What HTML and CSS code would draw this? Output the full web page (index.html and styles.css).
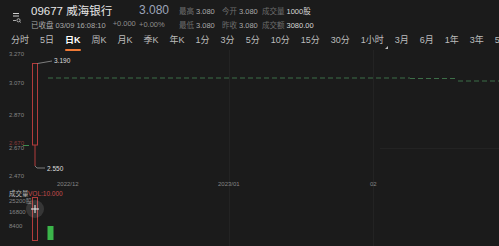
FILE: index.html
```html
<!DOCTYPE html>
<html lang="zh-CN">
<head>
    <meta charset="UTF-8">
    <meta name="viewport" content="width=device-width, initial-scale=1.0">
    <title>09677 威海银行</title>
    <link rel="stylesheet" href="styles.css">
</head>
<body>
    <div class="app">
        <div class="quote">
            <div class="menu-icon">
                <svg width="10" height="11" viewBox="0 0 10 11">
                    <line x1="1" y1="1.5" x2="7" y2="1.5" stroke="#cfcfcf" stroke-width="1"/>
                    <line x1="1" y1="4" x2="7" y2="4" stroke="#cfcfcf" stroke-width="1"/>
                    <line x1="1" y1="8.5" x2="4" y2="8.5" stroke="#cfcfcf" stroke-width="0.8"/>
                    <circle cx="6.5" cy="8.3" r="1.6" fill="none" stroke="#cfcfcf" stroke-width="0.8"/>
                    <line x1="7.6" y1="9.4" x2="8.8" y2="10.5" stroke="#cfcfcf" stroke-width="0.8"/>
                </svg>
            </div>
            <div class="stock-name">09677 威海银行</div>
            <div class="price">3.080</div>
            <div class="stat"><span class="label">最高</span>3.080</div>
            <div class="stat"><span class="label">今开</span>3.080</div>
            <div class="stat strong"><span class="label">成交量</span>1000股</div>

            <div class="status">
                <span>已收盘 03/09 16:08:10</span>
                <span class="change">+0.000</span>
            </div>
            <div class="change">+0.00%</div>
            <div class="stat"><span class="label">最低</span>3.080</div>
            <div class="stat"><span class="label">昨收</span>3.080</div>
            <div class="stat strong"><span class="label">成交额</span>3080.00</div>
        </div>

        <div class="tabs">
            <span class="tab">分时</span>
            <span class="tab">5日</span>
            <span class="tab active">日K</span>
            <span class="tab">周K</span>
            <span class="tab">月K</span>
            <span class="tab">季K</span>
            <span class="tab">年K</span>
            <span class="tab">1分</span>
            <span class="tab">3分</span>
            <span class="tab">5分</span>
            <span class="tab">10分</span>
            <span class="tab">15分</span>
            <span class="tab">30分</span>
            <span class="tab more">1小时</span>
            <span class="tab">3月</span>
            <span class="tab">6月</span>
            <span class="tab">1年</span>
            <span class="tab">3年</span>
            <span class="tab">5年</span>
        </div>

        <svg class="chart" width="499" height="196" viewBox="0 0 499 196">
            <!-- grid -->
            <line x1="229.5" y1="0" x2="229.5" y2="196" class="grid"/>
            <line x1="373.5" y1="0" x2="373.5" y2="196" class="grid"/>
            <line x1="380" y1="98.5" x2="499" y2="98.5" class="grid"/>

            <!-- y axis -->
            <text x="9" y="6" class="axis">3.270</text>
            <text x="9" y="35" class="axis">3.070</text>
            <text x="9" y="67" class="axis">2.870</text>
            <text x="9" y="95" class="axis red-faint">2.670</text>
            <text x="9" y="100" class="axis">2.670</text>
            <text x="9" y="128" class="axis">2.470</text>
            <line x1="23" y1="95.5" x2="29" y2="95.5" stroke="#3f8a4f" stroke-width="1"/>

            <!-- last price -->
            <path d="M48 28 H410" class="dash"/>
            <path d="M410 28.5 H458" class="dash"/>
            <path d="M458 31 H499" class="dash"/>

            <!-- candle -->
            <line x1="35" y1="95" x2="35" y2="116" class="wick"/>
            <rect x="32.5" y="13.5" width="5" height="81.5" class="candle"/>
            <polyline points="37.5,13.5 52,11" class="pointer"/>
            <polyline points="35,116 37,118 45,118" class="pointer"/>
            <text x="54" y="13.2" class="mark">3.190</text>
            <text x="47" y="120.8" class="mark">2.550</text>

            <!-- x axis -->
            <text x="57" y="136" class="axis">2022/12</text>
            <text x="218" y="136" class="axis">2023/01</text>
            <text x="370" y="136" class="axis">02</text>

            <!-- volume -->
            <text x="9" y="145.5" class="vol-title">成交量</text>
            <text x="28" y="145.5" class="vol-title red">VOL:10.000</text>
            <text x="9" y="152.5" class="axis">25200股</text>
            <text x="9" y="164" class="axis">16800</text>
            <text x="9" y="178" class="axis">8400</text>
            <rect x="32.5" y="147.5" width="5" height="43" class="candle"/>
            <rect x="47.5" y="176" width="6" height="14" fill="#3bb54a"/>

            <!-- crosshair -->
            <circle cx="35" cy="159" r="9" fill="rgba(255,255,255,0.12)"/>
            <line x1="31" y1="159" x2="39" y2="159" class="cross"/>
            <line x1="35" y1="155" x2="35" y2="163" class="cross"/>
        </svg>
    </div>
</body>
</html>
```

FILE: styles.css
```css
body {
    margin: 0;
    background-color: #1b1b1b;
    font-family: "Liberation Sans", "Noto Sans CJK SC", sans-serif;
    color: #cfcfcf;
}
.app {
    width: 499px;
    height: 246px;
    overflow: hidden;
    display: flex;
    flex-direction: column;
}
.quote {
    display: grid;
    grid-template-columns: 31px 108px 40px 43px 40px auto;
    grid-template-rows: 14px 14px;
    align-items: center;
    padding-top: 3px;
    font-size: 7.5px;
    color: #a9a9a9;
    white-space: nowrap;
}
.menu-icon {
    grid-row: 1 / span 2;
    display: flex;
    justify-content: center;
    padding-left: 3px;
}
.stock-name {
    font-size: 11.5px;
    color: #e6e6e6;
}
.price {
    font-size: 12px;
    color: #9ea5ba;
}
.stat .label {
    color: #6d6d6d;
    margin-right: 2px;
}
.stat.strong {
    color: #d8d8d8;
}
.status {
    display: flex;
    gap: 7px;
}
.change {
    color: #8e8e8e;
}
.tabs {
    display: flex;
    gap: 11px;
    padding: 3px 0 0 11px;
    height: 19px;
    font-size: 9px;
    color: #bdbdbd;
    white-space: nowrap;
}
.tab {
    position: relative;
    line-height: 13px;
}
.tab.active {
    color: #ffffff;
    font-weight: bold;
}
.tab.active::after {
    content: "";
    position: absolute;
    left: 0;
    right: 0;
    top: 15px;
    height: 2px;
    border-radius: 1px;
    background-color: #f07a36;
}
.tab.more::after {
    content: "";
    position: absolute;
    right: -4px;
    bottom: 1px;
    border-left: 3px solid transparent;
    border-bottom: 3px solid #bdbdbd;
}
.chart {
    display: block;
    flex: none;
}
.grid {
    stroke: #232323;
    stroke-width: 1;
}
.axis {
    font-size: 6px;
    fill: #858585;
}
.red-faint {
    fill: #8a3a3a;
}
.dash {
    stroke: #3d6e48;
    stroke-width: 1.2;
    stroke-dasharray: 5 3;
    fill: none;
}
.candle {
    fill: none;
    stroke: #b23c3c;
    stroke-width: 1;
}
.wick {
    stroke: #b23c3c;
    stroke-width: 1;
}
.pointer {
    fill: none;
    stroke: #bfbfbf;
    stroke-width: 0.6;
}
.mark {
    font-size: 6.5px;
    fill: #dedede;
}
.vol-title {
    font-size: 6.5px;
    fill: #bdbdbd;
}
.vol-title.red {
    fill: #c44b4b;
}
.cross {
    stroke: #f2f2f2;
    stroke-width: 1;
}
```
